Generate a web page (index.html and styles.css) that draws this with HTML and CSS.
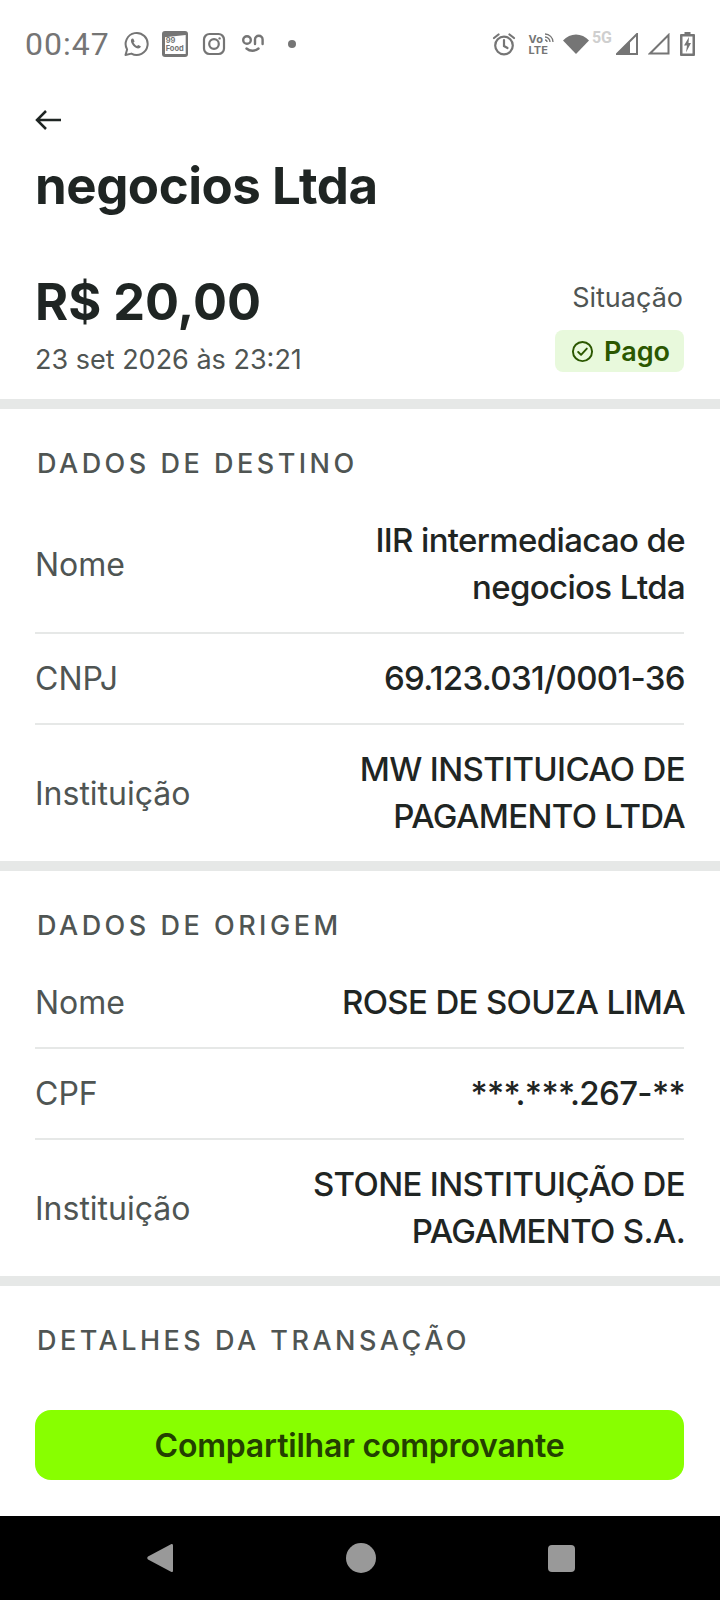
FILE: index.html
```html
<!DOCTYPE html>
<html lang="pt-BR">
<head>
    <meta charset="UTF-8">
    <meta name="viewport" content="width=device-width, initial-scale=1.0">
    <title>Comprovante</title>
    <link rel="stylesheet" href="styles.css">
</head>
<body>
    <div class="phone">
        <div class="statusBar">
            <div class="statusLeft">
                <span class="clock">00:47</span>
                <svg class="whatsIcon" width="26" height="26" viewBox="0 0 26 26" fill="none" stroke="#757575" stroke-width="2"><path d="M2.5 24l1.600-5.600A11 11 0 1 1 8.400 22.600z" stroke-linejoin="round"/><path d="M9 7.500c-1.500 1-1.500 3 0 5.500 1.500 2.500 3.500 4.200 6 4.500 1.500 0 3-1 2.800-2.200l-2.600-1.400-1.200 1.200c-1.500-.6-2.800-2-3.500-3.500l1.100-1.200-1.200-2.600z" fill="#757575" stroke="none"/></svg>
                <div class="foodIcon"><span>99</span><span>Food</span></div>
                <svg class="instaIcon" width="24" height="24" viewBox="0 0 24 24" fill="none" stroke="#757575" stroke-width="2.200"><rect x="2" y="2" width="20" height="20" rx="5.500"/><circle cx="12" cy="12" r="4.800"/><circle cx="17.600" cy="6.400" r="1.200" fill="#757575" stroke="none"/></svg>
                <svg class="onIcon" width="24" height="22" viewBox="0 0 24 22" fill="none" stroke="#757575" stroke-width="2.400" stroke-linecap="round"><circle cx="6" cy="7" r="3.800"/><path d="M14 11V6.500a3.800 3.800 0 0 1 7.600 0V11"/><path d="M5.500 15.500c3.500 3 8.500 3 12 0"/></svg>
                <span class="moreDot"></span>
            </div>
            <div class="statusRight">
                <svg class="alarmIcon" width="24" height="24" viewBox="0 0 24 24" fill="none" stroke="#757575" stroke-width="2.200"><circle cx="12" cy="13.500" r="8.800"/><path d="M12 8v6l3.500 2" stroke-linecap="round"/><path d="M2 6l4.500-3.500M22 6l-4.500-3.500" stroke-linecap="round"/></svg>
                <div class="volte"><span>Vo<svg width="10" height="10" viewBox="0 0 10 10" fill="none" stroke="#757575" stroke-width="1.300"><path d="M1 1a8 8 0 0 1 8 8M1 4a5 5 0 0 1 5 5M1 7a2 2 0 0 1 2 2"/></svg></span><span>LTE</span></div>
                <svg class="wifiIcon" width="28" height="22" viewBox="0 0 28 22"><path d="M14 21L1 7.500C8-.5 20-.5 27 7.500z" fill="#757575"/></svg>
                <span class="fiveG">5G</span>
                <svg class="signalIcon" width="22" height="22" viewBox="0 0 22 22" fill="none"><path d="M21 1v20H1z" fill="none" stroke="#757575" stroke-width="2"/><path d="M14 8L1 21h13z" fill="#757575"/></svg>
                <svg class="signalIcon" width="22" height="22" viewBox="0 0 22 22" fill="none"><path d="M20.500 2v18.500H2z" stroke="#757575" stroke-width="2"/></svg>
                <svg class="batteryIcon" width="15" height="24" viewBox="0 0 15 24"><path d="M4.500 0h6v2H14a1 1 0 0 1 1 1v20a1 1 0 0 1-1 1H1a1 1 0 0 1-1-1V3a1 1 0 0 1 1-1h3.500z" fill="#757575"/><rect x="2.500" y="4.500" width="10" height="17" fill="#fff"/><path d="M9 5L4 13.500h3L6 20.500l5-9.500H8.500z" fill="#757575"/></svg>
            </div>
        </div>

        <div class="content">
            <div class="topHeader">
                <svg class="backIcon" width="26" height="24" viewBox="0 0 26 24" fill="none" stroke="#1f2523" stroke-width="2.500"><path d="M26 12H2M11 3l-9 9 9 9"/></svg>
                <h1>negocios Ltda</h1>
            </div>

            <div class="summary">
                <div class="summaryLeft">
                    <div class="amount">R$ 20,00</div>
                    <div class="date">23 set 2026 às 23:21</div>
                </div>
                <div class="summaryRight">
                    <div class="statusLabel">Situação</div>
                    <div class="badge">
                        <svg width="23" height="23" viewBox="0 0 24 24" fill="none" stroke="#2b5700" stroke-width="2"><circle cx="12" cy="12" r="10"/><path d="M7.500 12.500l3 3 6-6.500" stroke-linecap="round" stroke-linejoin="round"/></svg>
                        <span>Pago</span>
                    </div>
                </div>
            </div>

            <div class="sectionBlock">
                <h2>DADOS DE DESTINO</h2>
                <div class="infoRow">
                    <span class="infoLabel">Nome</span>
                    <span class="infoValue">IIR intermediacao de<br>negocios Ltda</span>
                </div>
                <div class="infoRow">
                    <span class="infoLabel">CNPJ</span>
                    <span class="infoValue">69.123.031/0001-36</span>
                </div>
                <div class="infoRow">
                    <span class="infoLabel">Instituição</span>
                    <span class="infoValue">MW INSTITUICAO DE<br>PAGAMENTO LTDA</span>
                </div>
            </div>

            <div class="sectionBlock">
                <h2>DADOS DE ORIGEM</h2>
                <div class="infoRow">
                    <span class="infoLabel">Nome</span>
                    <span class="infoValue">ROSE DE SOUZA LIMA</span>
                </div>
                <div class="infoRow">
                    <span class="infoLabel">CPF</span>
                    <span class="infoValue">***.***.267-**</span>
                </div>
                <div class="infoRow">
                    <span class="infoLabel">Instituição</span>
                    <span class="infoValue">STONE INSTITUIÇÃO DE<br>PAGAMENTO S.A.</span>
                </div>
            </div>

            <div class="sectionBlock lastBlock">
                <h2>DETALHES DA TRANSAÇÃO</h2>
            </div>
        </div>

        <div class="footer">
            <button type="button" class="shareBtn">Compartilhar comprovante</button>
        </div>

        <div class="navBar">
            <svg width="28" height="30" viewBox="0 0 28 30"><path d="M27 2.500v25c0 1.500-1 2-2 1.200L2 16.500c-1-.8-1-2 0-3L25 1.300c1-.8 2-.3 2 1.200z" fill="#999"/></svg>
            <span class="navCircle"></span>
            <span class="navSquare"></span>
        </div>
    </div>
</body>
</html>
```

FILE: styles.css
```css
* {
    box-sizing: border-box;
}
body {
    margin: 0;
    font-family: Inter, "Liberation Sans", sans-serif;
    background-color: #ffffff;
    color: #1f2523;
}
.phone {
    width: 720px;
    height: 1600px;
    display: flex;
    flex-direction: column;
    overflow: hidden;
}
.statusBar {
    height: 88px;
    padding: 0 25px;
    display: flex;
    justify-content: space-between;
    align-items: center;
}
.statusLeft, .statusRight {
    display: flex;
    align-items: center;
}
.clock {
    font-family: Roboto, sans-serif;
    font-size: 32px;
    color: #757575;
    letter-spacing: 1px;
    margin-right: 13px;
}
.foodIcon {
    width: 26px;
    height: 26px;
    margin: 0 14px 0 13px;
    background-color: #757575;
    border-radius: 3px;
    color: #757575;
    padding: 6px 0 0 4px;
    display: flex;
    flex-direction: column;
    font-size: 7.5px;
    font-weight: 700;
    line-height: 8px;
    align-items: flex-start;
    position: relative;
    z-index: 0;
}
.foodIcon::before {
    content: "";
    position: absolute;
    left: 3px;
    right: 2px;
    top: 4px;
    bottom: 3px;
    background-color: #fff;
    clip-path: polygon(0 12%, 100% 0, 100% 100%, 0 100%);
    z-index: -1;
}
.onIcon {
    margin-left: 15px;
}
.moreDot {
    width: 8px;
    height: 8px;
    margin-left: 23px;
    background-color: #757575;
    border-radius: 50%;
}
.volte {
    margin: 0 8px 0 13px;
    display: flex;
    flex-direction: column;
    color: #757575;
    font-size: 11px;
    line-height: 11px;
    font-weight: 700;
}
.volte svg {
    margin-left: 1px;
}
.wifiIcon {
    margin-right: 2px;
}
.fiveG {
    font-family: Roboto, sans-serif;
    font-size: 16px;
    font-weight: 700;
    color: #cfcfcf;
    margin: -14px 4px 0 0;
}
.signalIcon {
    margin-right: 10px;
}
.content {
    flex: 1;
}
.topHeader {
    padding: 20px 35px 0;
}
.backIcon {
    display: block;
}
h1 {
    margin: 25px 0 0;
    font-size: 51px;
    line-height: 58px;
    font-weight: 700;
    letter-spacing: -0.5px;
}
.summary {
    margin-top: 57px;
    padding: 0 36px 22px 35px;
    display: flex;
    justify-content: space-between;
    border-bottom: 10px solid #e6e8e7;
}
.amount {
    font-size: 50.5px;
    line-height: 60px;
    font-weight: 700;
}
.date {
    margin-top: 11px;
    font-size: 27px;
    line-height: 34px;
    color: #4f5553;
}
.summaryRight {
    display: flex;
    flex-direction: column;
    align-items: flex-end;
}
.statusLabel {
    font-size: 27px;
    line-height: 32px;
    color: #4f5553;
    margin: 10px 1px 0 0;
}
.badge {
    margin-top: 16px;
    height: 42px;
    padding: 0 14px 0 16px;
    display: flex;
    align-items: center;
    gap: 10px;
    background-color: #e8f9dc;
    border-radius: 8px;
    color: #2b5700;
    font-size: 27px;
    font-weight: 600;
}
.sectionBlock {
    padding: 0 36px 0 35px;
    border-bottom: 10px solid #e6e8e7;
}
.lastBlock {
    border-bottom: none;
}
h2 {
    margin: 0 0 15px;
    padding: 38px 0 0 2px;
    font-size: 27px;
    line-height: 34px;
    font-weight: 500;
    letter-spacing: 3.5px;
    color: #4f5553;
}
.infoRow {
    padding: 21px 0;
    display: flex;
    justify-content: space-between;
    align-items: center;
    border-bottom: 2px solid #e6e8e7;
}
.infoRow:last-child {
    border-bottom: none;
}
.infoLabel {
    font-size: 32px;
    line-height: 47px;
    color: #4f5553;
}
.infoValue {
    font-size: 33px;
    line-height: 47px;
    font-weight: 500;
    text-align: right;
    letter-spacing: -0.65px;
    margin-right: -1px;
}
.footer {
    height: 106px;
    padding: 0 36px 0 35px;
}
.shareBtn {
    display: block;
    width: 100%;
    height: 70px;
    border: none;
    border-radius: 16px;
    background-color: #88ff00;
    color: #234000;
    font-family: Inter, "Liberation Sans", sans-serif;
    font-size: 32px;
    font-weight: 600;
    letter-spacing: -0.2px;
}
.navBar {
    height: 84px;
    background-color: #000000;
    display: flex;
    align-items: center;
    padding: 0 145px 0 146px;
    justify-content: space-between;
}
.navCircle {
    width: 30px;
    height: 30px;
    background-color: #999;
    border-radius: 50%;
}
.navSquare {
    width: 27px;
    height: 27px;
    background-color: #999;
    border-radius: 4px;
}
```
